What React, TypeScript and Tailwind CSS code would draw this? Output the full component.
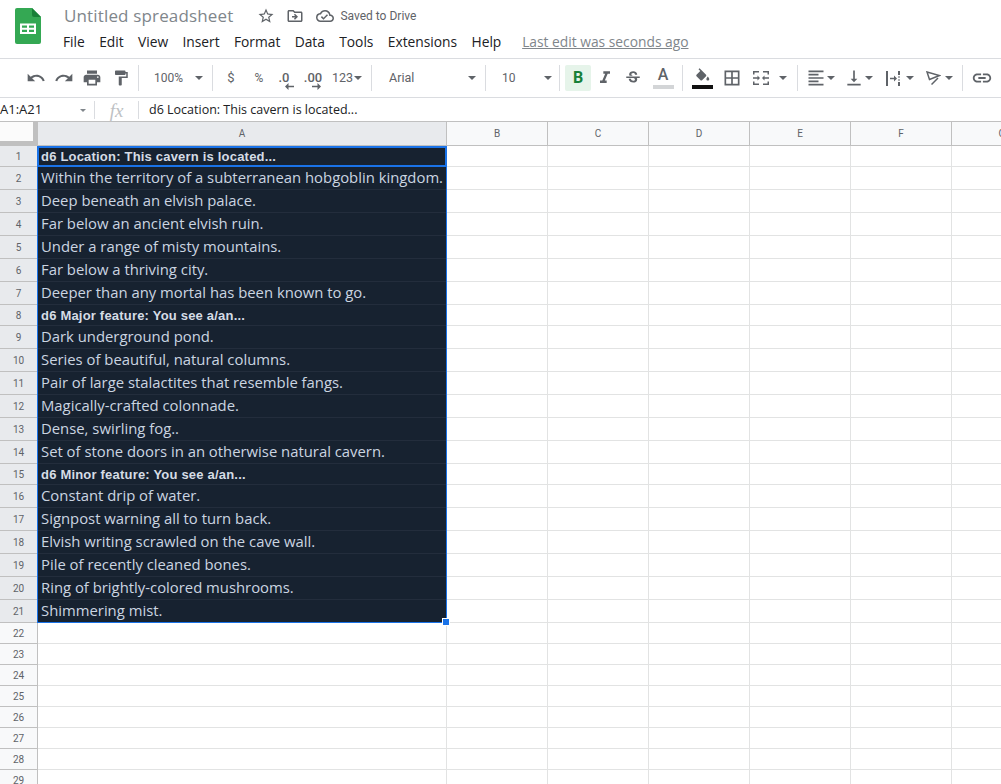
import type { ReactNode } from "react";
import {
  MdUndo,
  MdRedo,
  MdPrint,
  MdFormatPaint,
  MdFormatItalic,
  MdStrikethroughS,
  MdBorderAll,
  MdFormatAlignLeft,
  MdVerticalAlignBottom,
  MdLink,
  MdStarBorder,
  MdOutlineDriveFileMove,
  MdOutlineCloudDone,
} from "react-icons/md";

const menu = ["File", "Edit", "View", "Insert", "Format", "Data", "Tools", "Extensions", "Help"];

const rows: { text: string; bold?: boolean }[] = [
  { text: "d6 Location: This cavern is located...", bold: true },
  { text: "Within the territory of a subterranean hobgoblin kingdom." },
  { text: "Deep beneath an elvish palace." },
  { text: "Far below an ancient elvish ruin." },
  { text: "Under a range of misty mountains." },
  { text: "Far below a thriving city." },
  { text: "Deeper than any mortal has been known to go." },
  { text: "d6 Major feature: You see a/an...", bold: true },
  { text: "Dark underground pond." },
  { text: "Series of beautiful, natural columns." },
  { text: "Pair of large stalactites that resemble fangs." },
  { text: "Magically-crafted colonnade." },
  { text: "Dense, swirling fog.." },
  { text: "Set of stone doors in an otherwise natural cavern." },
  { text: "d6 Minor feature: You see a/an...", bold: true },
  { text: "Constant drip of water." },
  { text: "Signpost warning all to turn back." },
  { text: "Elvish writing scrawled on the cave wall." },
  { text: "Pile of recently cleaned bones." },
  { text: "Ring of brightly-colored mushrooms." },
  { text: "Shimmering mist." },
];

const emptyRows = [22, 23, 24, 25, 26, 27, 28, 29];
const otherCols = ["B", "C", "D", "E", "F", "G"];

function Caret() {
  return (
    <span className="flex w-[10px] shrink-0 justify-center">
      <span className="h-0 w-0 border-x-[4px] border-t-[4px] border-x-transparent border-t-[#5f6368]" />
    </span>
  );
}

function Sep() {
  return <span className="h-[26px] w-px shrink-0 bg-[#dadce0]" />;
}

function Btn({ w, children }: { w: string; children: ReactNode }) {
  return <div className={`flex shrink-0 items-center justify-center text-[#5f6368] ${w}`}>{children}</div>;
}

function SheetsLogo() {
  return (
    <svg width="26" height="36" viewBox="0 0 26 36" className="shrink-0">
      <path d="M2 0H17L26 9V34a2 2 0 0 1-2 2H2a2 2 0 0 1-2-2V2a2 2 0 0 1 2-2z" fill="#34a853" />
      <path d="M17 0L26 9H19a2 2 0 0 1-2-2z" fill="#188038" />
      <path d="M5 15.500H21V26H5zM7 17.500V19.800H12V17.500zM14 17.500V19.800H19V17.500zM7 21.700V24H12V21.700zM14 21.700V24H19V21.700z" fill="#fff" fillRule="evenodd" />
    </svg>
  );
}

function MergeIcon() {
  return (
    <svg width="16" height="14" viewBox="0 0 16 14" fill="#5f6368">
      <path d="M0 0h6v1.500H1.500V3.500H0zM10 0h6v3.500h-1.500V1.500H10zM0 10.500h1.500v2H6V14H0zM14.500 10.500H16V14h-6v-1.500h4.500z" />
      <path d="M0 6.250h4.500V4.500L7 7 4.500 9.500V7.750H0zM16 6.250h-4.500V4.500L9 7l2.500 2.500V7.750H16z" />
    </svg>
  );
}

function WrapIcon() {
  return (
    <svg width="14" height="15" viewBox="0 0 14 15" fill="#5f6368">
      <path d="M0 0h2v15H0zM12 0h2v4h-2zM12 5.500h2v1h-2zM12 8.500h2v1h-2zM12 11h2v4h-2z" />
      <path d="M4 6.750h4V4.500L11 7.500 8 10.500V8.250H4z" />
    </svg>
  );
}

function RotateIcon() {
  return (
    <svg width="15" height="14" viewBox="0 0 15 14" fill="none" stroke="#5f6368" strokeWidth="1.500">
      <path d="M1 1L13.500 4.500L3.500 8.500z" />
      <path d="M5.500 13.500L12 7" />
    </svg>
  );
}

function ArrowMark({ dir }: { dir: "left" | "right" }) {
  return (
    <svg
      width="9"
      height="7"
      viewBox="0 0 9 7"
      fill="#5f6368"
      className={`absolute top-[12px] ${dir === "left" ? "left-[7px]" : "left-[8px]"}`}
    >
      {dir === "left" ? <path d="M9 2.800H3.500V0L0 3.500 3.500 7V4.200H9z" /> : <path d="M0 2.800h5.500V0L9 3.500 5.500 7V4.200H0z" />}
    </svg>
  );
}

function TopBar() {
  return (
    <div className="flex h-[58px] shrink-0 gap-[21px] pl-[15px]">
      <div className="pt-2">
        <SheetsLogo />
      </div>
      <div className="flex flex-col pl-[2px]">
        <div className="flex h-[32px] items-center">
          <span className="text-[17px] tracking-[0.15px] text-[#80868b]">Untitled spreadsheet</span>
          <MdStarBorder className="ml-[24px] text-[#5f6368]" size={18} />
          <MdOutlineDriveFileMove className="ml-[11px] text-[#5f6368]" size={18} />
          <MdOutlineCloudDone className="ml-[12px] text-[#5f6368]" size={18} />
          <span className="ml-[6px] font-['Roboto',sans-serif] text-[12px] text-[#5f6368]">Saved to Drive</span>
        </div>
        <div className="-ml-px flex items-center gap-[14.300px] text-[13.800px] leading-5 text-[#202124]">
          {menu.map((m) => (
            <span key={m}>{m}</span>
          ))}
          <span className="ml-[6.500px] text-[#80868b] underline">Last edit was seconds ago</span>
        </div>
      </div>
    </div>
  );
}

function Toolbar() {
  return (
    <div className="flex h-[40px] shrink-0 items-center border-y border-[#dadce0] pl-[22px] font-['Roboto',sans-serif] text-[12px] text-[#5f6368]">
      <Btn w="w-[28px]"><MdUndo size={20} /></Btn>
      <Btn w="w-[28px]"><MdRedo size={20} /></Btn>
      <Btn w="w-[28px]"><MdPrint size={20} /></Btn>
      <Btn w="w-[29px]"><MdFormatPaint size={18} /></Btn>
      <span className="w-[3px] shrink-0" />
      <Sep />
      <div className="flex w-[73px] shrink-0 items-center justify-between pr-[8px] pl-[15px]">
        <span>100%</span>
        <Caret />
      </div>
      <Sep />
      <Btn w="w-[36px]"><span className="text-[13px]">$</span></Btn>
      <Btn w="w-[20px]"><span className="text-[12px]">%</span></Btn>
      <Btn w="w-[30px]">
        <span className="relative -mt-[2px] text-[13px] leading-none font-medium">
          .0
          <ArrowMark dir="left" />
        </span>
      </Btn>
      <Btn w="w-[28px]">
        <span className="relative -mt-[2px] text-[13px] leading-none font-medium">
          .00
          <ArrowMark dir="right" />
        </span>
      </Btn>
      <div className="flex w-[44px] shrink-0 items-center gap-px pl-[5px]">
        <span className="text-[12.500px]">123</span>
        <span className="h-0 w-0 border-x-[4px] border-t-[4px] border-x-transparent border-t-[#5f6368]" />
      </div>
      <Sep />
      <div className="flex w-[113px] shrink-0 items-center justify-between pr-[8px] pl-[17px] font-['Roboto',sans-serif]">
        <span className="text-[12.500px]">Arial</span>
        <Caret />
      </div>
      <Sep />
      <div className="flex w-[73px] shrink-0 items-center justify-between pr-[6px] pl-[16px]">
        <span>10</span>
        <Caret />
      </div>
      <Sep />
      <span className="w-[5px] shrink-0" />
      <div className="flex h-[26px] w-[26px] shrink-0 items-center justify-center rounded-[2px] bg-[#e6f4ea] font-['Roboto',sans-serif] text-[16px] font-bold text-[#188038]">
        B
      </div>
      <Btn w="w-[28px]"><MdFormatItalic size={20} /></Btn>
      <Btn w="w-[28px]"><MdStrikethroughS size={18} /></Btn>
      <Btn w="w-[32px]">
        <div className="flex flex-col items-center">
          <span className="font-['Roboto',sans-serif] text-[16px] leading-[16px] font-medium text-[#5f6368]">A</span>
          <span className="mt-[2px] h-[4px] w-[21px] bg-[#d3d5d7]" />
        </div>
      </Btn>
      <span className="w-[3px] shrink-0" />
      <Sep />
      <Btn w="w-[38px]">
        <div className="flex flex-col items-center">
          <svg width="16" height="15" viewBox="0 0 22 20" fill="#5f6368">
            <path d="M16.560 8.940L7.620 0 6.210 1.410l2.380 2.380-5.150 5.150c-.59.59-.59 1.540 0 2.120l5.500 5.500c.29.29.68.44 1.060.44s.77-.15 1.060-.44l5.500-5.500c.59-.58.59-1.530 0-2.120z" />
            <path d="M19 11.500s-2 2.170-2 3.500c0 1.100.9 2 2 2s2-.9 2-2c0-1.330-2-3.500-2-3.500z" />
          </svg>
          <span className="mt-[2px] h-[4px] w-[21px] bg-[#111]" />
        </div>
      </Btn>
      <Btn w="w-[22px]"><MdBorderAll size={20} /></Btn>
      <Btn w="w-[35px]"><MergeIcon /></Btn>
      <Caret />
      <span className="w-[9px] shrink-0" />
      <Sep />
      <div className="flex w-[28px] shrink-0 items-center justify-center pl-[8px] text-[#5f6368]"><MdFormatAlignLeft size={20} /></div>
      <Caret />
      <div className="flex w-[28px] shrink-0 items-center justify-center pl-[8px] text-[#5f6368]"><MdVerticalAlignBottom size={20} /></div>
      <Caret />
      <div className="flex w-[31px] shrink-0 items-center justify-center pl-[6px]"><WrapIcon /></div>
      <Caret />
      <div className="flex w-[29px] shrink-0 items-center justify-center pl-[7px]"><RotateIcon /></div>
      <Caret />
      <span className="w-[8px] shrink-0" />
      <Sep />
      <Btn w="w-[38px]"><MdLink size={22} /></Btn>
    </div>
  );
}

function FormulaBar() {
  return (
    <div className="flex h-[24px] shrink-0 items-center border-b border-[#c0c0c0] pt-px text-[12.500px] text-[#202124]">
      <div className="flex w-[94px] shrink-0 items-center justify-between pr-[8px] text-[#202124]">
        <span className="text-[13px]">A1:A21</span>
        <span className="h-0 w-0 border-x-[3.500px] border-t-[3.500px] border-x-transparent border-t-[#80868b]" />
      </div>
      <span className="h-[18px] w-px bg-[#dadce0]" />
      <span className="w-[43px] text-center font-['Liberation_Serif',serif] text-[19px] leading-none text-[#bdc1c4] italic">fx</span>
      <span className="h-[18px] w-px bg-[#dadce0]" />
      <span className="pl-[10px]">d6 Location: This cavern is located...</span>
    </div>
  );
}

function GridHeader() {
  return (
    <div className="flex h-[24px] shrink-0 border-b border-[#c0c0c0] font-['Roboto',sans-serif] text-[10px] text-[#5f6368]">
      <div className="w-[38px] shrink-0 border-r-[5px] border-b-[4px] border-[#c0c0c0] bg-[#fbfbfb]" />
      <div className="flex w-[409px] shrink-0 items-center justify-center border-r border-[#c0c0c0] bg-[#e8eaed]">A</div>
      {otherCols.map((c) => (
        <div key={c} className="flex w-[101px] shrink-0 items-center justify-center border-r border-[#c0c0c0] bg-[#f8f9fa]">
          {c}
        </div>
      ))}
    </div>
  );
}

function Grid() {
  return (
    <div className="relative flex flex-col font-['Roboto',sans-serif]">
      {rows.map((r, i) => (
        <div key={i} className={`flex shrink-0 ${r.bold ? "h-[21px]" : "h-[23px]"}`}>
          <div className="flex w-[38px] shrink-0 items-center justify-center border-r border-b border-[#c0c0c0] bg-[#e8eaed] text-[10px] text-[#5f6368]">
            {i + 1}
          </div>
          <div
            className={`flex w-[409px] shrink-0 items-center border-b border-[#232d3c] bg-[#172230] pl-[3px] whitespace-nowrap ${
              r.bold
                ? "pt-px font-['Liberation_Sans',sans-serif] text-[13px] font-bold tracking-[0.2px] text-[#d5dce5]"
                : "pb-[2px] font-['Open_Sans',sans-serif] text-[14.850px] text-[#cbd5e1]"
            }`}
          >
            {r.text}
          </div>
          {otherCols.map((c) => (
            <div key={c} className="w-[101px] shrink-0 border-r border-b border-[#e2e3e3]" />
          ))}
        </div>
      ))}
      {emptyRows.map((n) => (
        <div key={n} className="flex h-[21px] shrink-0">
          <div className="flex w-[38px] shrink-0 items-center justify-center border-r border-b border-[#c0c0c0] bg-[#f8f9fa] text-[10px] text-[#5f6368]">
            {n}
          </div>
          <div className="w-[409px] shrink-0 border-r border-b border-[#e2e3e3]" />
          {otherCols.map((c) => (
            <div key={c} className="w-[101px] shrink-0 border-r border-b border-[#e2e3e3]" />
          ))}
        </div>
      ))}
      {/* selection + active cell */}
      <div className="pointer-events-none absolute top-0 left-[37px] h-[477px] w-[410px] border border-[#1a73e8]" />
      <div className="pointer-events-none absolute top-0 left-[37px] h-[21px] w-[410px] border-2 border-[#1a73e8]" />
      <div className="absolute top-[472px] left-[442px] h-[8px] w-[8px] border border-white bg-[#1a73e8]" />
    </div>
  );
}

export default function App() {
  return (
    <div className="flex h-[784px] w-[1001px] flex-col overflow-hidden bg-white font-['Open_Sans',sans-serif]">
      <TopBar />
      <Toolbar />
      <FormulaBar />
      <GridHeader />
      <Grid />
    </div>
  );
}
